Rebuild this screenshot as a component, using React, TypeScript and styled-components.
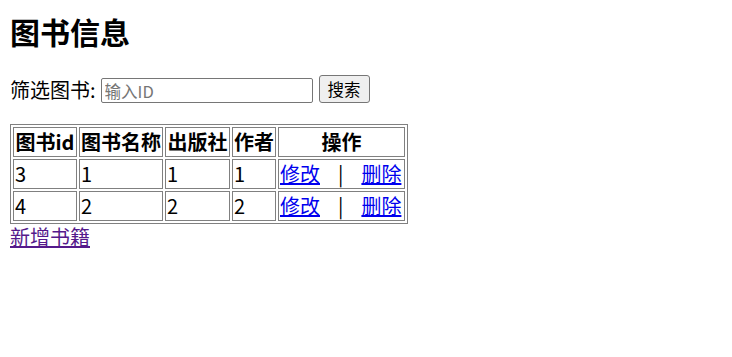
import React from 'react';
import styled, { createGlobalStyle } from 'styled-components';

const GlobalStyle = createGlobalStyle`
  html, body {
    margin: 0;
    padding: 0;
    background: #fff;
  }
  body {
    font-family: "Noto Sans CJK SC", "Noto Sans", sans-serif;
    color: #000;
  }
`;

const Page = styled.div`
  padding: 11px 10px 10px;
`;

const Title = styled.h2`
  margin: 0;
  font-size: 30px;
  line-height: 40px;
  font-weight: 700;
`;

const FilterRow = styled.div`
  display: flex;
  align-items: center;
  margin-top: 24px;
  height: 28px;
  font-size: 20px;
`;

const Label = styled.span`
  margin-right: 5px;
`;

const SearchInput = styled.input`
  box-sizing: border-box;
  width: 212px;
  height: 25px;
  margin-top: 3px;
  padding: 0 3px;
  border: 1px solid #767676;
  border-radius: 2px;
  font: 16.5px "Noto Sans CJK SC", sans-serif;
  &::placeholder {
    color: #757575;
  }
`;

const Button = styled.button`
  box-sizing: border-box;
  width: 51px;
  height: 28px;
  margin-left: 6px;
  padding: 0;
  border: 1px solid #767676;
  border-radius: 3px;
  background: #efefef;
  font: 16.5px "Noto Sans CJK SC", sans-serif;
  color: #000;
`;

const Table = styled.table`
  margin-top: 21px;
  border: 1px solid #808080;
  border-spacing: 2px;
  font-size: 20px;
`;

const Cell = styled.td<{ $head?: boolean; $w?: number }>`
  border: 1px solid #808080;
  padding: 1px;
  line-height: 26px;
  font-weight: ${(p) => (p.$head ? 700 : 400)};
  text-align: ${(p) => (p.$head ? 'center' : 'left')};
  white-space: nowrap;
  ${(p) => (p.$w ? `width: ${p.$w}px;` : '')}
`;

const Link = styled.a<{ $visited?: boolean }>`
  color: ${(p) => (p.$visited ? '#551a8b' : '#0000ee')};
  text-decoration: underline;
`;

const Divider = styled.span`
  margin: 0 18px;
`;

const AddLink = styled(Link)`
  display: inline-block;
  font-size: 20px;
  line-height: 26px;
`;

const columns = [
  { title: '图书id', width: 60 },
  { title: '图书名称', width: 80 },
  { title: '出版社', width: 61 },
  { title: '作者', width: 40 },
  { title: '操作', width: 123 },
];

const books = [
  { id: 3, name: '1', press: '1', author: '1' },
  { id: 4, name: '2', press: '2', author: '2' },
];

const App = () => {
  return (
    <Page>
      <GlobalStyle />
      <Title>图书信息</Title>
      <FilterRow>
        <Label>筛选图书:</Label>
        <SearchInput placeholder="输入ID" />
        <Button>搜索</Button>
      </FilterRow>
      <Table>
        <tbody>
          <tr>
            {columns.map((c) => (
              <Cell key={c.title} $head $w={c.width}>
                {c.title}
              </Cell>
            ))}
          </tr>
          {books.map((b) => (
            <tr key={b.id}>
              <Cell>{b.id}</Cell>
              <Cell>{b.name}</Cell>
              <Cell>{b.press}</Cell>
              <Cell>{b.author}</Cell>
              <Cell>
                <Link href="#">修改</Link>
                <Divider>|</Divider>
                <Link href="#">删除</Link>
              </Cell>
            </tr>
          ))}
        </tbody>
      </Table>
      <AddLink href="#" $visited>
        新增书籍
      </AddLink>
    </Page>
  );
};

export default App;
